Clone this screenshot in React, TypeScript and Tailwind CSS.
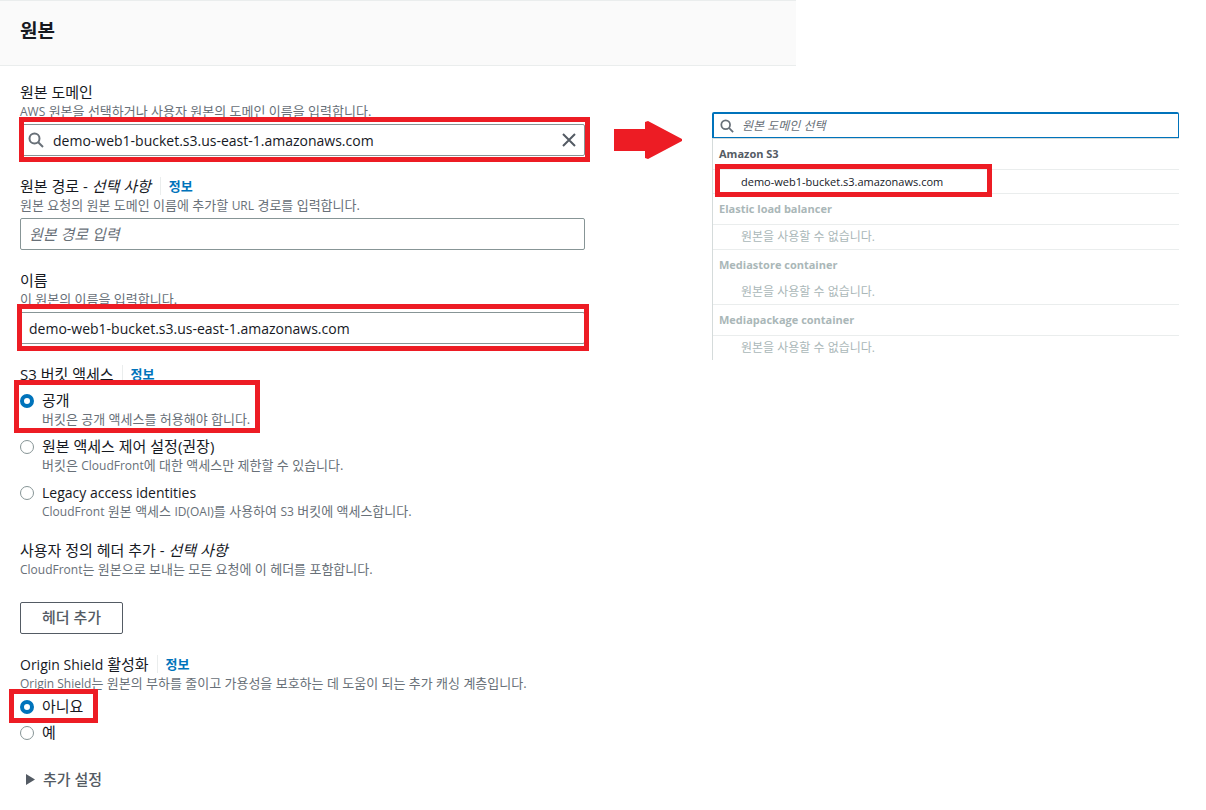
import { useState, type ReactNode } from 'react';
import clsx from 'clsx';

// Latin words run a size smaller than the hangul around them
const accessOptions = [
  { value: 'public', label: '공개', description: '버킷은 공개 액세스를 허용해야 합니다.' },
  {
    value: 'oac',
    label: '원본 액세스 제어 설정(권장)',
    description: <>버킷은 <span className="text-xs">CloudFront</span>에 대한 액세스만 제한할 수 있습니다.</>,
  },
  {
    value: 'oai',
    label: <span className="text-sm leading-5">Legacy access identities</span>,
    description: (
      <>
        <span className="text-xs">CloudFront</span> 원본 액세스 <span className="text-xs">ID(OAI)</span>를 사용하여{' '}
        <span className="text-xs">S3</span> 버킷에 액세스합니다.
      </>
    ),
  },
];

const shieldOptions = [
  { value: 'no', label: '아니요' },
  { value: 'yes', label: '예' },
];

const emptyGroups = [
  { name: 'Elastic load balancer', divided: true },
  { name: 'Mediastore container', divided: false },
  { name: 'Mediapackage container', divided: true },
];

const inputClass =
  'block h-8 w-full rounded-xs border border-[#879596] bg-white text-sm text-[#16191f] placeholder:text-[15px] placeholder:italic placeholder:text-[#687078]';

function SearchIcon({ className }: { className?: string }) {
  return (
    <svg viewBox="0 0 16 16" fill="none" stroke="#687078" strokeWidth="2" className={className} aria-hidden="true">
      <circle cx="6.5" cy="6.5" r="5" />
      <path d="M10.2 10.2 15 15" />
    </svg>
  );
}

// Red frame drawn over the step being explained
function Highlight({ className }: { className: string }) {
  return <span className={clsx('pointer-events-none absolute z-10 border-5 border-[#ed1c24]', className)} />;
}

function InfoLink() {
  return (
    <a href="#info" className="ml-2 border-l border-[#eaeded] pl-2 text-[13px] leading-[18px] font-bold text-[#0073bb]">
      정보
    </a>
  );
}

type HeadingProps = { htmlFor?: string; optional?: boolean; info?: boolean; description: ReactNode; children: ReactNode };

function Heading({ htmlFor, optional, info, description, children }: HeadingProps) {
  const Tag = htmlFor ? 'label' : 'span';
  return (
    <>
      <div className="flex h-[22px] items-center text-[15px] leading-[22px]">
        <Tag htmlFor={htmlFor}>
          {children}
          {optional && <> - <i className="pr-px">선택 사항</i></>}
        </Tag>
        {info && <InfoLink />}
      </div>
      <p className="h-4 text-[13px] leading-4 text-[#687078]">{description}</p>
    </>
  );
}

type RadioProps = {
  name: string;
  value: string;
  label: ReactNode;
  description?: ReactNode;
  checked: boolean;
  onChange: (value: string) => void;
  children?: ReactNode;
};

function Radio({ name, value, label, description, checked, onChange, children }: RadioProps) {
  return (
    <div className="relative flex items-start gap-2">
      <input
        type="radio"
        id={`${name}-${value}`}
        name={name}
        checked={checked}
        onChange={() => onChange(value)}
        className="mt-1 size-3.5 shrink-0 appearance-none rounded-full border border-[#879596] bg-white checked:border-4 checked:border-[#0073bb]"
      />
      <label htmlFor={`${name}-${value}`} className="block pb-px">
        <span className="block h-[21px] text-[15px] leading-5">{label}</span>
        {description && <span className="block h-4 text-[13px] leading-4 text-[#687078]">{description}</span>}
      </label>
      {children}
    </div>
  );
}

function OriginSuggest() {
  return (
    <div className="pt-[46px] text-xs">
      <div className="flex h-[26px] items-center gap-2 rounded-t-xs border border-t-2 border-l-2 border-[#0073bb] pl-1.5">
        <SearchIcon className="size-3.5 shrink-0" />
        <input
          type="text"
          aria-label="원본 도메인 선택"
          placeholder="원본 도메인 선택"
          className="w-full min-w-0 outline-none placeholder:italic placeholder:text-[#687078]"
        />
      </div>
      <div className="border-t border-l border-[#d5dbdb]">
        <h3 className="border-b border-[#eaeded] pl-1.5 text-[11px] leading-[30px] font-bold text-[#545b64]">Amazon S3</h3>
        <div className="relative">
          <button type="button" className="block h-6 w-full border-b border-[#eaeded] pl-7 text-left text-[11px] leading-6">
            demo-web1-bucket.s3.amazonaws.com
          </button>
          <Highlight className="-top-1.5 -bottom-[3px] left-0.5 w-[277px]" />
        </div>
        {emptyGroups.map((group) => (
          <div key={group.name} className="border-b border-[#eaeded] text-[#aab7b8] last:border-b-0">
            <h3 className={clsx('pl-1.5 text-[11px] leading-[30px] font-bold', group.divided && 'border-b border-[#eaeded]')}>
              {group.name}
            </h3>
            <p className="h-6 pl-7 leading-6">원본을 사용할 수 없습니다.</p>
          </div>
        ))}
      </div>
    </div>
  );
}

export default function App() {
  const [domain, setDomain] = useState('demo-web1-bucket.s3.us-east-1.amazonaws.com');
  const [name, setName] = useState('demo-web1-bucket.s3.us-east-1.amazonaws.com');
  const [access, setAccess] = useState('public');
  const [shield, setShield] = useState('no');

  return (
    <main className="min-h-screen bg-white font-['Open_Sans','Noto_Sans_CJK_KR',sans-serif] text-[#16191f]">
      <header className="w-[66%] border-y border-[#eaeded] bg-[#fafafa] px-5 py-[18px]">
        <h1 className="pb-1 text-[19px] leading-6 font-bold">원본</h1>
      </header>

      <div className="grid grid-cols-[minmax(0,565fr)_69px_minmax(0,467fr)] items-start gap-x-[29px] pr-[27px] pl-5">
        <form className="flex flex-col gap-[19px] pt-[15px] pb-5" onSubmit={(e) => e.preventDefault()}>
          <div>
            <Heading
              htmlFor="domain"
              description={<><span className="text-xs">AWS</span> 원본을 선택하거나 사용자 원본의 도메인 이름을 입력합니다.</>}
            >
              원본 도메인
            </Heading>
            <div className="relative mt-[5px]">
              <SearchIcon className="absolute top-2 left-2 size-4" />
              <input id="domain" type="text" value={domain} onChange={(e) => setDomain(e.target.value)} className={clsx(inputClass, 'px-8')} />
              <button type="button" aria-label="지우기" onClick={() => setDomain('')} className="absolute top-2 right-2">
                <svg viewBox="0 0 16 16" stroke="#545b64" strokeWidth="2" className="size-4" aria-hidden="true">
                  <path d="m2 2 12 12M14 2 2 14" />
                </svg>
              </button>
              <Highlight className="-top-[7px] -right-[5px] -bottom-1.5 -left-px" />
            </div>
          </div>

          <div>
            <Heading
              htmlFor="path"
              optional
              info
              description={<>원본 요청의 원본 도메인 이름에 추가할 <span className="text-xs">URL</span> 경로를 입력합니다.</>}
            >
              원본 경로
            </Heading>
            <input id="path" type="text" placeholder="원본 경로 입력" className={clsx(inputClass, 'mt-[5px] px-2')} />
          </div>

          <div>
            <Heading htmlFor="name" description="이 원본의 이름을 입력합니다.">
              이름
            </Heading>
            <div className="relative mt-[5px]">
              <input id="name" type="text" value={name} onChange={(e) => setName(e.target.value)} className={clsx(inputClass, 'px-2')} />
              <Highlight className="-top-2 -right-1 -bottom-[7px] -left-[3px]" />
            </div>
          </div>

          <fieldset>
            <legend className="flex h-[22px] items-center text-[15px] leading-[22px]">
              <span>S3 버킷 액세스</span>
              <InfoLink />
            </legend>
            <div className="mt-[5px] flex flex-col gap-2">
              {accessOptions.map((option) => (
                <Radio key={option.value} {...option} name="access" checked={access === option.value} onChange={setAccess}>
                  {option.value === 'public' && <Highlight className="-top-2.5 -bottom-[5px] -left-1.5 w-[246px]" />}
                </Radio>
              ))}
            </div>
          </fieldset>

          <div>
            <Heading
              optional
              description={<><span className="text-xs">CloudFront</span>는 원본으로 보내는 모든 요청에 이 헤더를 포함합니다.</>}
            >
              사용자 정의 헤더 추가
            </Heading>
            <button type="button" className="mt-[25px] block h-8 rounded-xs border border-[#545b64] px-[21px] pb-0.5 text-[15px] font-medium text-[#545b64]">
              헤더 추가
            </button>
          </div>

          <div>
            <Heading
              info
              description={
                <>
                  <span className="text-xs">Origin Shield</span>는 원본의 부하를 줄이고 가용성을 보호하는 데 도움이 되는 추가 캐싱 계층입니다.
                </>
              }
            >
              <span className="text-sm">Origin Shield</span> 활성화
            </Heading>
            <div className="mt-[5px] flex flex-col gap-1">
              {shieldOptions.map((option) => (
                <Radio key={option.value} {...option} name="shield" checked={shield === option.value} onChange={setShield}>
                  {option.value === 'no' && <Highlight className="-top-[7px] -bottom-[5px] -left-[11px] w-[89px]" />}
                </Radio>
              ))}
            </div>
          </div>

          <button type="button" className="mt-[5px] flex h-[22px] items-center gap-2 pl-1.5 text-[15px] font-medium text-[#545b64]">
            <svg viewBox="0 0 9 11" fill="#545b64" className="h-[11px] w-[9px]" aria-hidden="true">
              <path d="M0 0v11l9-5.5z" />
            </svg>
            추가 설정
          </button>
        </form>

        <div className="pt-[55px]">
          <svg viewBox="0 0 68 38" fill="#ed1c24" className="w-[68px]" aria-hidden="true">
            <path d="M0 8h31V1l3-1 34 18v2L34 38l-3-1v-7H0z" />
          </svg>
        </div>

        <OriginSuggest />
      </div>
    </main>
  );
}
